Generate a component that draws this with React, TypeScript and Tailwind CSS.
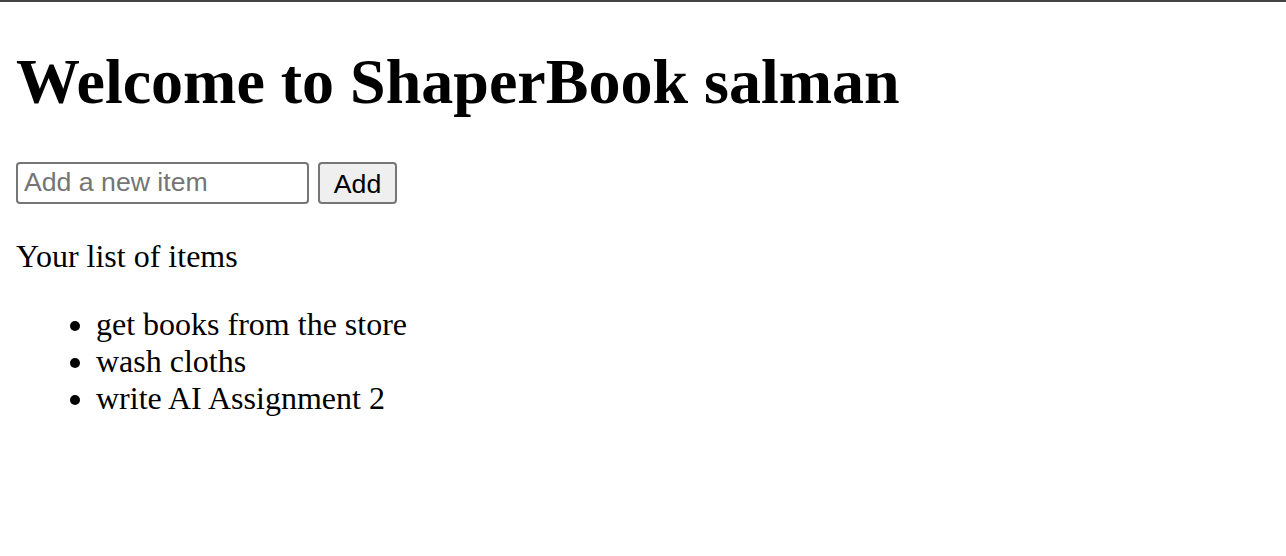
import { useState } from "react";

const serif = "font-['Liberation_Serif','Times_New_Roman',serif]";
const sans = "font-['Liberation_Sans',Arial,sans-serif]";

export default function App() {
  const [items] = useState([
    "get books from the store",
    "wash cloths",
    "write AI Assignment 2",
  ]);

  return (
    <div className={`min-h-[556px] bg-white text-black ${serif}`}>
      <div className="h-[2px] bg-[#444444]" />
      <div className="px-[16px]">
        <h1 className="pt-[43px] pb-[41px] text-[64px] font-bold leading-[73.5px]">
          Welcome to ShaperBook salman
        </h1>

        <form className="flex items-center gap-[9px] py-[2px]" onSubmit={(e) => e.preventDefault()}>
          <input
            type="text"
            placeholder="Add a new item"
            className={`h-[42px] w-[293px] rounded-[4px] border-2 border-[#767676] px-[6px] text-[26.67px] text-black placeholder:text-[#757575] outline-none ${sans}`}
          />
          <button
            type="submit"
            className={`h-[42px] w-[79px] rounded-[4px] border-2 border-[#767676] bg-[#efefef] text-[26.67px] text-black ${sans}`}
          >
            Add
          </button>
        </form>

        <p className="mt-[32px] text-[32px] leading-[36.8px]">Your list of items</p>

        <ul className="mt-[32px] list-disc pl-[80px] text-[32px] leading-[36.8px]">
          {items.map((item) => (
            <li key={item}>{item}</li>
          ))}
        </ul>
      </div>
    </div>
  );
}
